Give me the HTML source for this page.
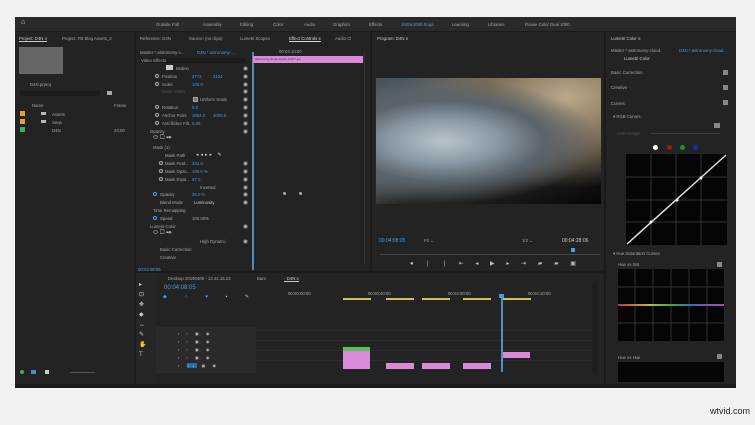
<!DOCTYPE html>
<html><head><style>
*{margin:0;padding:0;box-sizing:border-box}
body{width:755px;height:425px;background:#f2f2f2;position:relative;overflow:hidden;font-family:"Liberation Sans",sans-serif;font-size:4px;color:#999}
.a{position:absolute}
.p{position:absolute;background:#232323}
.t{position:absolute;white-space:nowrap;font-size:4.3px;color:#a8a8a8}
.b{color:#4a9de0}
.ic{position:absolute;width:5px;height:5px;border-radius:50%;background:#bbb}
.sw{position:absolute;left:243px;width:5px;height:5px;border-radius:50%;background:#aaa;border:1px solid #555}
.sc{position:absolute;left:150px;width:4px;height:4px;border-radius:50%;border:1px solid #aaa}
.row{position:absolute;height:1px;background:#2b2b2b}
.pink{position:absolute;background:#d98ad9;height:6px}
.yel{position:absolute;background:#c9c35a;height:2px}
</style></head><body>
<div class="a" style="left:15px;top:17px;width:721px;height:371px;background:#1a1a1a"></div>
<div class="a" style="left:15px;top:17px;width:721px;height:14px;background:#2a2a2a"></div>
<div class="t" style="left:21px;top:19px;color:#ddd;font-size:7px">⌂</div>
<div class="t" style="left:156px;top:22px">Outside Full</div>
<div class="t" style="left:203px;top:22px">Assembly</div>
<div class="t" style="left:240px;top:22px">Editing</div>
<div class="t" style="left:273px;top:22px">Color</div>
<div class="t" style="left:304px;top:22px">Audio</div>
<div class="t" style="left:333px;top:22px">Graphics</div>
<div class="t" style="left:369px;top:22px">Effects</div>
<div class="t b" style="left:401px;top:22px">1920x1080 Enga</div>
<div class="t" style="left:452px;top:22px">Learning</div>
<div class="t" style="left:488px;top:22px">Libraries</div>
<div class="t" style="left:525px;top:22px">Rouse Color Dual 1080</div>
<!-- project panel -->
<div class="p" style="left:15px;top:32px;width:119px;height:352px"></div>
<div class="t" style="left:19px;top:36px;color:#ccc;text-decoration:underline">Project: D4N ≡</div>
<div class="t" style="left:62px;top:36px">Project: FB Blog Assets_2</div>
<div class="a" style="left:19px;top:47px;width:44px;height:27px;background:#666"></div>
<div class="t" style="left:30px;top:82px">D4N.prproj</div>
<div class="a" style="left:20px;top:91px;width:80px;height:5px;background:#1b1b1b"></div>
<div class="a" style="left:107px;top:91px;width:5px;height:4px;background:#aaa"></div>
<div class="t" style="left:32px;top:103px">Name</div><div class="t" style="left:114px;top:103px">Frame</div>
<div class="a" style="left:20px;top:111px;width:5px;height:5px;background:#e8a030"></div>
<div class="a" style="left:20px;top:119px;width:5px;height:5px;background:#e8a030"></div>
<div class="a" style="left:20px;top:127px;width:5px;height:5px;background:#3cb050"></div>
<div class="a" style="left:41px;top:112px;width:5px;height:3px;background:#bbb"></div>
<div class="a" style="left:41px;top:120px;width:5px;height:3px;background:#bbb"></div>
<div class="t" style="left:52px;top:112px">Assets</div><div class="t" style="left:52px;top:120px">Seqs</div><div class="t" style="left:52px;top:128px">D4N</div><div class="t" style="left:114px;top:128px">24;00</div>
<div class="a" style="left:20px;top:370px;width:4px;height:4px;border-radius:50%;background:#3cb050"></div>
<div class="a" style="left:31px;top:370px;width:5px;height:4px;background:#4a8ad0"></div>
<div class="a" style="left:45px;top:370px;width:4px;height:4px;background:#ccc"></div>
<div class="a" style="left:70px;top:372px;width:25px;height:1px;background:#555"></div>
<!-- effect controls -->
<div class="p" style="left:136px;top:32px;width:234px;height:239px"></div>
<div class="t" style="left:140px;top:36px">Reference: D4N</div>
<div class="t" style="left:189px;top:36px">Source: (no clips)</div>
<div class="t" style="left:240px;top:36px">Lumetri Scopes</div>
<div class="t" style="left:289px;top:36px;color:#ddd;text-decoration:underline">Effect Controls ≡</div>
<div class="t" style="left:335px;top:36px">Audio Cl</div>
<div class="t" style="left:140px;top:50px">Master * astronomy-c...</div>
<div class="t b" style="left:197px;top:50px">D4N * astronomy-...</div>
<div class="a" style="left:140px;top:58px;width:106px;height:5px;background:#1c1c1c"></div>
<div class="t" style="left:141px;top:58px">Video Effects</div>
<div class="a" style="left:252px;top:52px;width:2px;height:218px;background:#4a8ac0"></div>
<div class="t" style="left:279px;top:49px">00:04:10:00</div>
<div class="pink" style="left:253px;top:56px;width:110px;height:7px"></div>
<div class="t" style="left:255px;top:57px;font-size:3px;color:#533">astronomy-cloud-clouds-1191?.jpg</div>
<div class="a" style="left:364px;top:52px;width:1px;height:212px;background:#333"></div>
<div class="sw" style="top:66px"></div><div class="sw" style="top:74px"></div><div class="sw" style="top:82px"></div><div class="sw" style="top:89px"></div><div class="sw" style="top:97px"></div><div class="sw" style="top:105px"></div><div class="sw" style="top:113px"></div><div class="sw" style="top:121px"></div><div class="sw" style="top:129px"></div>
<div class="sw" style="top:161px"></div><div class="sw" style="top:169px"></div><div class="sw" style="top:177px"></div><div class="sw" style="top:185px"></div><div class="sw" style="top:192px"></div><div class="sw" style="top:200px"></div><div class="sw" style="top:224px"></div><div class="sw" style="top:239px"></div>
<div class="sc" style="left:155px;top:74px"></div><div class="sc" style="left:155px;top:82px"></div><div class="sc" style="left:155px;top:105px"></div><div class="sc" style="left:155px;top:113px"></div><div class="sc" style="left:155px;top:121px"></div>
<div class="sc" style="left:159px;top:161px"></div><div class="sc" style="left:159px;top:169px"></div><div class="sc" style="left:159px;top:177px"></div><div class="sc" style="left:153px;top:192px;border-color:#4a9de0"></div><div class="sc" style="left:153px;top:216px;border-color:#4a9de0"></div>
<div class="a" style="left:166px;top:65px;width:7px;height:5px;background:#ccc"></div>
<div class="t" style="left:176px;top:66px">Motion</div>
<div class="t" style="left:162px;top:74px">Position</div><div class="t b" style="left:192px;top:74px">3772</div><div class="t b" style="left:213px;top:74px">2124</div>
<div class="t" style="left:162px;top:82px">Scale</div><div class="t b" style="left:192px;top:82px">100.0</div>
<div class="t" style="left:162px;top:89px;color:#555">Scale Width</div>
<div class="a" style="left:193px;top:97px;width:5px;height:5px;border:1px solid #aaa;background:#777"></div>
<div class="t" style="left:200px;top:97px">Uniform Scale</div>
<div class="t" style="left:162px;top:105px">Rotation</div><div class="t b" style="left:192px;top:105px">0.0</div>
<div class="t" style="left:162px;top:113px">Anchor Point</div><div class="t b" style="left:192px;top:113px">1004.0</div><div class="t b" style="left:213px;top:113px">1000.0</div>
<div class="t" style="left:162px;top:121px">Anti-flicker Filt.</div><div class="t b" style="left:192px;top:121px">0.00</div>
<div class="t" style="left:150px;top:129px">Opacity</div>
<div class="t" style="left:153px;top:135px;color:#ccc;font-size:6px">⬭ ▢ ✒</div>
<div class="t" style="left:153px;top:145px">Mask (1)</div>
<div class="t" style="left:165px;top:153px">Mask Path</div>
<div class="t" style="left:196px;top:152px;color:#ccc;font-size:5px;letter-spacing:2px">◂◂▸▸ ✎</div>
<div class="t" style="left:165px;top:161px">Mask Feat..</div><div class="t b" style="left:192px;top:161px">342.0</div>
<div class="t" style="left:165px;top:169px">Mask Opac..</div><div class="t b" style="left:192px;top:169px">100.0 %</div>
<div class="t" style="left:165px;top:177px">Mask Expa..</div><div class="t b" style="left:192px;top:177px">67.0</div>
<div class="t" style="left:200px;top:185px">Inverted</div>
<div class="t" style="left:160px;top:192px">Opacity</div><div class="t b" style="left:192px;top:192px">26.0 %</div>
<div class="t" style="left:160px;top:200px">Blend Mode</div><div class="t" style="left:194px;top:200px;color:#ccc">Luminosity</div>
<div class="t" style="left:153px;top:208px">Time Remapping</div>
<div class="t" style="left:160px;top:216px">Speed</div><div class="t" style="left:192px;top:216px">100.00%</div>
<div class="t" style="left:150px;top:224px">Lumetri Color</div>
<div class="t" style="left:153px;top:230px;color:#ccc;font-size:6px">⬭ ▢ ✒</div>
<div class="t" style="left:200px;top:239px">High Dynami..</div>
<div class="t" style="left:160px;top:247px">Basic Correction</div>
<div class="t" style="left:160px;top:255px">Creative</div>
<div class="t b" style="left:138px;top:267px">00:04:08:05</div>
<div class="a" style="left:283px;top:192px;width:3px;height:3px;border-radius:50%;background:#aaa"></div>
<div class="a" style="left:299px;top:192px;width:3px;height:3px;border-radius:50%;background:#aaa"></div>
<!-- program -->
<div class="p" style="left:372px;top:32px;width:232px;height:239px"></div>
<div class="t" style="left:377px;top:36px;color:#ccc">Program: D4N ≡</div>
<div class="a" style="left:376px;top:78px;width:225px;height:126px;background:radial-gradient(ellipse at 30% 50%,#b8c4cc 0%,#8898a4 25%,#5a646c 45%,transparent 70%),radial-gradient(ellipse at 85% 15%,#b9a98a 0%,#7a6c56 30%,transparent 60%),linear-gradient(160deg,#46525a 0%,#6a747a 40%,#2a2a28 65%,#050505 100%)"></div>
<div class="t b" style="left:379px;top:238px;font-size:5px">00:04:08:05</div>
<div class="t" style="left:424px;top:238px">Fit ⌄</div>
<div class="t" style="left:522px;top:238px">1/2 ⌄</div>
<div class="t" style="left:562px;top:238px;color:#ccc;font-size:5px">00:04:28:06</div>
<div class="a" style="left:380px;top:254px;width:220px;height:1px;background:#444"></div>
<div class="a" style="left:571px;top:248px;width:4px;height:4px;background:#3da0e8"></div>
<div class="t" style="left:410px;top:260px;color:#bbb;font-size:6px;letter-spacing:5px">● ❘ ❘ ⇤ ◂ ▶ ▸ ⇥ ▰ ▰ ▣</div>
<!-- timeline -->
<div class="p" style="left:136px;top:273px;width:468px;height:111px"></div>
<div class="a" style="left:136px;top:273px;width:20px;height:111px;background:#262626"></div>
<div class="t" style="left:168px;top:276px">Desktop 20190409 - 13.44.15.22</div>
<div class="t" style="left:257px;top:276px">Bars</div>
<div class="t" style="left:284px;top:276px;color:#ccc;border-bottom:1px solid #ccc">· D4N ≡</div>
<div class="t b" style="left:164px;top:285px;font-size:6px">00:04:08:05</div>
<div class="t" style="left:163px;top:294px;color:#3da0e8;font-size:5px;letter-spacing:8px">◆ ∩ ♥ <span style="color:#bbb">▪ ✎</span></div>
<div class="t" style="left:288px;top:291px">00:00:00:00</div>
<div class="t" style="left:368px;top:291px">00:00:40:00</div>
<div class="t" style="left:448px;top:291px">00:04:00:00</div>
<div class="t" style="left:528px;top:291px">00:04:10:00</div>
<div class="yel" style="left:343px;top:298px;width:28px"></div>
<div class="yel" style="left:386px;top:298px;width:28px"></div>
<div class="yel" style="left:422px;top:298px;width:28px"></div>
<div class="yel" style="left:463px;top:298px;width:28px"></div>
<div class="yel" style="left:503px;top:298px;width:28px"></div>
<div class="a" style="left:156px;top:327px;width:100px;height:46px;background:#2a2a2a"></div>
<div class="t" style="left:178px;top:330px;color:#bbb;font-size:4px;line-height:8px;letter-spacing:3px">▪ ▫ ▣ ◉<br>▪ ▫ ▣ ◉<br>▪ ▫ ▣ ◉<br>▪ ▫ ▣ ◉<br>▪ <span style="background:#2a6aa0">V1</span> ▣ ◉</div>
<div class="row" style="left:256px;top:330px;width:340px"></div>
<div class="row" style="left:256px;top:340px;width:340px"></div>
<div class="row" style="left:256px;top:350px;width:340px"></div>
<div class="row" style="left:256px;top:360px;width:340px"></div>
<div class="a" style="left:343px;top:347px;width:27px;height:22px;background:#d98ad9"></div>
<div class="a" style="left:343px;top:347px;width:27px;height:4px;background:#5bbf5b"></div>
<div class="pink" style="left:386px;top:363px;width:28px"></div>
<div class="pink" style="left:422px;top:363px;width:28px"></div>
<div class="pink" style="left:463px;top:363px;width:28px"></div>
<div class="pink" style="left:503px;top:352px;width:27px"></div>
<div class="a" style="left:501px;top:296px;width:2px;height:76px;background:#5a8db8"></div>
<div class="a" style="left:499px;top:294px;width:5px;height:4px;background:#3da0e8"></div>
<div class="a" style="left:592px;top:283px;width:5px;height:90px;background:#1e1e1e"></div>
<div class="t" style="left:139px;top:280px;color:#ccc;font-size:6px;line-height:10px">▸<br>⊡<br>✥<br>◆<br>↔<br>✎<br>✋<br>T</div>
<!-- lumetri -->
<div class="p" style="left:606px;top:32px;width:130px;height:352px"></div>
<div class="t" style="left:611px;top:36px;color:#ccc">Lumetri Color ≡</div>
<div class="t" style="left:611px;top:48px">Master * astronomy-cloud..</div>
<div class="t b" style="left:679px;top:48px">D4N * astronomy-cloud..</div>
<div class="t" style="left:624px;top:56px;color:#ccc">Lumetri Color</div>
<div class="t" style="left:611px;top:70px">Basic Correction</div>
<div class="t" style="left:611px;top:85px">Creative</div>
<div class="t" style="left:611px;top:101px">Curves</div>
<div class="t" style="left:613px;top:114px">▾ RGB Curves</div>
<div class="a" style="left:723px;top:70px;width:5px;height:5px;background:#888"></div>
<div class="a" style="left:723px;top:85px;width:5px;height:5px;background:#888"></div>
<div class="a" style="left:723px;top:100px;width:5px;height:5px;background:#888"></div>
<div class="a" style="left:714px;top:123px;width:6px;height:5px;background:#888"></div>
<div class="t" style="left:617px;top:131px;color:#555">HSR Range</div>
<div class="a" style="left:650px;top:133px;width:70px;height:1px;background:#3a3a3a"></div>
<div class="ic" style="left:653px;top:145px;background:#fff"></div>
<div class="ic" style="left:667px;top:145px;background:#a01818"></div>
<div class="ic" style="left:680px;top:145px;background:#1a9a1a"></div>
<div class="ic" style="left:693px;top:145px;background:#1a2ab0"></div>
<svg class="a" style="left:626px;top:154px" width="101" height="91"><rect width="101" height="91" fill="#050505"/><g stroke="#333" stroke-width="1"><path d="M25 0V91M50 0V91M75 0V91M0 23H101M0 46H101M0 68H101"/></g><path d="M1 90L100 1" stroke="#ddd" stroke-width="1.5"/><circle cx="25" cy="68" r="1.5" fill="#fff"/><circle cx="51" cy="46" r="1.5" fill="#fff"/><circle cx="75" cy="24" r="1.5" fill="#fff"/></svg>
<div class="t" style="left:613px;top:251px">▾ Hue Saturation Curves</div>
<div class="t" style="left:618px;top:262px">Hue vs Sat</div>
<div class="a" style="left:717px;top:262px;width:5px;height:5px;background:#888"></div>
<svg class="a" style="left:618px;top:269px" width="106" height="72"><rect width="106" height="72" fill="#050505"/><g stroke="#333"><path d="M17 0V72M35 0V72M53 0V72M71 0V72M89 0V72M0 18H106M0 36H106M0 54H106"/></g><defs><linearGradient id="g"><stop offset="0" stop-color="#d03030"/><stop offset=".3" stop-color="#c0c030"/><stop offset=".5" stop-color="#30b030"/><stop offset=".7" stop-color="#3070d0"/><stop offset="1" stop-color="#c040a0"/></linearGradient></defs><rect x="0" y="35" width="106" height="2" fill="url(#g)"/></svg>
<div class="t" style="left:618px;top:355px">Hue vs Hue</div>
<div class="a" style="left:717px;top:354px;width:5px;height:5px;background:#888"></div>
<div class="a" style="left:618px;top:362px;width:106px;height:20px;background:#050505"></div>
<div class="t" style="left:710px;top:406px;color:#222;font-size:9px">wtvid.com</div>
</body></html>
